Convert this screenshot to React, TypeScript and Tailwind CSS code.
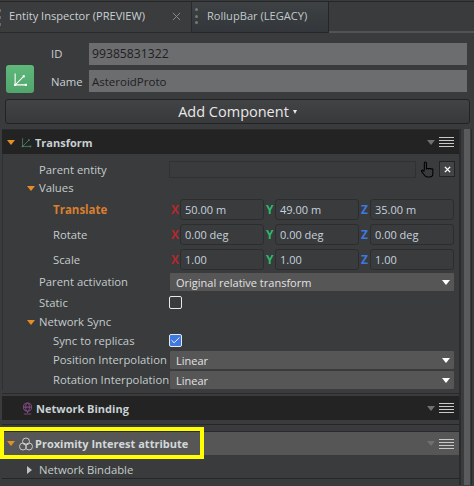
import { Check } from "lucide-react";
import type { ReactNode } from "react";

const FONT = "font-['Open_Sans','Noto_Sans',sans-serif]";

function TriDown({ className = "border-t-[#e58e26]" }: { className?: string }) {
  return <span className={`inline-block w-0 h-0 border-x-[4.5px] border-x-transparent border-t-[5px] ${className}`} />;
}

function TransformIcon({ className, color }: { className?: string; color: string }) {
  return (
    <svg viewBox="0 0 14 14" className={className} fill="none" stroke={color} strokeWidth="1">
      <path d="M2 1.5V12H12.5" />
      <path d="M2.5 11.5L10 4" />
      <rect x="1" y="11" width="2" height="2" fill={color} stroke="none" />
      <rect x="11" y="11" width="2" height="2" fill={color} stroke="none" />
      <rect x="9" y="3" width="2" height="2" fill={color} stroke="none" />
    </svg>
  );
}

function HeaderMenu() {
  return (
    <div className="flex items-center gap-[4px] ml-auto mr-[5px]">
      <TriDown className="border-t-[#6f7072]" />
      <div className="flex flex-col gap-[2px] w-[15px]">
        <div className="h-px bg-[#c8c8c8]" />
        <div className="h-px bg-[#c8c8c8]" />
        <div className="h-px bg-[#c8c8c8]" />
        <div className="h-px bg-[#c8c8c8]" />
      </div>
    </div>
  );
}

function Row({ label, indent, h, color = "text-[#c4cbcc]", bold, children }: {
  label: string; indent: number; h: string; color?: string; bold?: boolean; children?: ReactNode;
}) {
  return (
    <div className={`flex items-center ${h}`}>
      <div className={`w-[166px] shrink-0 whitespace-nowrap ${color} ${bold ? "font-bold text-[11.5px]" : ""} ${indent === 1 ? "pl-[36px]" : "pl-[50px]"}`}>
        {label}
      </div>
      {children}
    </div>
  );
}

function Group({ label, h }: { label: string; h: string }) {
  return (
    <div className={`flex items-center ${h} pl-[24px] gap-[3px] text-[#c4cbcc]`}>
      <TriDown />
      <span className="ml-[1px]">{label}</span>
    </div>
  );
}

function Vec({ values }: { values: string[] }) {
  const axes = [
    ["X", "text-[#b3282c]"],
    ["Y", "text-[#2fb86a]"],
    ["Z", "text-[#3f78e0]"],
  ];
  return (
    <div className="flex items-center pl-[2px] gap-[2px]">
      {values.map((v, i) => (
        <div key={axes[i][0]} className="flex items-center">
          <span className={`w-[9px] font-bold text-[12px] ${axes[i][1]}`}>{axes[i][0]}</span>
          <div className="w-[84px] h-[21px] pl-[4px] flex items-center border border-[#2c2d2f] rounded-[3px] text-[11px] text-[#c5d3dd] bg-[#3a3b3d]">
            {v}
          </div>
        </div>
      ))}
    </div>
  );
}

function Select({ value }: { value: string }) {
  return (
    <div className="w-[284px] ml-px h-[18px] bg-[#565656] flex items-center pl-[6px] pr-[4px] text-[11px] text-[#e2e2e2] rounded-[1px]">
      <span>{value}</span>
      <span className="ml-auto inline-block w-0 h-0 border-x-[4px] border-x-transparent border-t-[5px] border-t-white" />
    </div>
  );
}

function PanelHeader({ h, dark, children }: { h: string; dark?: boolean; children: ReactNode }) {
  return (
    <div className={`relative flex items-center ${h} ${dark ? "bg-[#232323]" : "bg-[#565656]"} text-[#c8d0d4] font-bold text-[11px]`}>
      {children}
      <HeaderMenu />
    </div>
  );
}

export default function App() {
  return (
    <div className={`${FONT} w-[474px] h-[486px] overflow-hidden bg-[#3a3b3d] text-[11.3px] leading-none`}>
      {/* タブ */}
      <div className="h-[33px] pt-px">
        <div className="flex h-[32px] border-t border-t-[#262626] text-[11.1px]">
          <div className="w-[192px] h-[31px] flex items-center pl-[9px] pb-[2px] bg-[#3b3c3e] border-r border-b border-[#2a2a2c] text-[#c9d1d2] relative">
            <div className="absolute left-[-1px] top-[7px] flex flex-col gap-[4px]">
              <div className="w-[2px] h-[3px] bg-[#6a6b6d]" />
              <div className="w-[2px] h-[3px] bg-[#6a6b6d]" />
              <div className="w-[2px] h-[3px] bg-[#6a6b6d]" />
            </div>
            Entity Inspector (PREVIEW)
            <svg viewBox="0 0 10 10" className="absolute left-[172px] top-[10px] w-[9px] h-[9px]" stroke="#8a8b8d" strokeWidth="1.1">
              <path d="M1 1L9 9M9 1L1 9" />
            </svg>
          </div>
          <div className="w-[137px] h-[31px] flex items-center pl-[15px] pb-[2px] bg-gradient-to-b from-[#3e4244] to-[#33363a] border-r border-b border-[#262626] text-[#c0cacb] relative">
            <div className="absolute left-[3px] top-[6px] flex flex-col gap-[3.5px]">
              <div className="w-[3px] h-[3px] rounded-full bg-[#77787a]" />
              <div className="w-[3px] h-[3px] rounded-full bg-[#77787a]" />
              <div className="w-[3px] h-[3px] rounded-full bg-[#77787a]" />
            </div>
            RollupBar (LEGACY)
          </div>
          <div className="flex-1 h-[31px] border-b-2 border-b-[#525355]" />
        </div>
      </div>

      {/* エンティティ情報 */}
      <div className="flex h-[60px] pl-[6px] pr-[7px] pt-[10px]">
        <div className="w-[28px] h-[28px] mt-[22px] rounded-[3px] bg-gradient-to-b from-[#5fb97a] to-[#50a56c] flex items-center justify-center shrink-0">
          <TransformIcon className="w-[15px] h-[15px]" color="#ffffff" />
        </div>
        <div className="flex-1 flex flex-col gap-[5px]">
          <div className="flex items-center h-[22px]">
            <span className="w-[21px] ml-[17px] text-[#c9d1d2]">ID</span>
            <div className="ml-[17px] flex-1 h-[22px] bg-[#6c6d6f] flex items-center pl-[3px] text-[12.2px] text-[#1f2023]">99385831322</div>
          </div>
          <div className="flex items-center h-[22px]">
            <span className="w-[38px] ml-[17px] pt-px text-[#c9d1d2]">Name</span>
            <div className="flex-1 h-[22px] bg-[#6c6d6f] flex items-center pl-[3px] pt-px text-[11.5px] text-[#1f2023]">AsteroidProto</div>
          </div>
        </div>
      </div>

      {/* 追加ボタン */}
      <div className="pl-[5px] pr-[4px] pt-[6px]">
        <div className="h-[25px] rounded-[3px] border border-[#232325] bg-gradient-to-b from-[#424345] to-[#38393b] flex items-center justify-center pt-px text-[14.5px] text-[#e8e8e8] gap-[4px]">
          Add Component
          <TriDown className="border-t-[#e8e8e8] !border-x-[2.5px] !border-t-[4px]" />
        </div>
      </div>

      <div className="flex mt-[5px] pl-[2px]">
        <div className="w-[457px] shrink-0">
          {/* Transform */}
          <div className="border-t border-[#2a2a2c]">
            <PanelHeader h="h-[24px]" dark>
              <span className="ml-[5px] flex"><TriDown /></span>
              <TransformIcon className="w-[11px] h-[11px] ml-[6px] mr-[2px]" color="#4c8a63" />
              <span className="ml-px">Transform</span>
            </PanelHeader>
            <div className="border-l border-l-[#2f3032]">
              <Row label="Parent entity" indent={1} h="h-[28px] pt-[2px]" color="text-[#c4cbcc] pt-px">
                <div className="w-[247px] h-[17px] border border-[#303133] bg-[#3a3b3d]" />
                <svg viewBox="1 0 12 16" className="w-[13px] h-[17px] ml-[5px]" fill="none" stroke="#000000" strokeWidth="1">
                  <path d="M4 9V2a1 1 0 0 1 2 0v6M6 7h2v1M8 7h2v1M10 7.5h2V12c0 2-1.5 3-3 3H7c-1.5 0-3-1.500-4-3L1.500 10c-.5-1 .5-2 1.500-1L4 10" />
                </svg>
                <div className="w-[16px] h-[16px] ml-[5px] bg-[#434446] border border-[#232325] flex items-center justify-center">
                  <svg viewBox="0 0 8 8" className="w-[7px] h-[7px]" stroke="#ffffff" strokeWidth="1.6"><path d="M1 1L7 7M7 1L1 7" /></svg>
                </div>
              </Row>
              <Group label="Values" h="h-[12px]" />
              <Row label="Translate" indent={2} h="h-[28px] pt-[3px]" color="text-[#d97f2e]" bold>
                <Vec values={["50.00 m", "49.00 m", "35.00 m"]} />
              </Row>
              <Row label="Rotate" indent={2} h="h-[25px]"><Vec values={["0.00 deg", "0.00 deg", "0.00 deg"]} /></Row>
              <Row label="Scale" indent={2} h="h-[25px]"><Vec values={["1.00", "1.00", "1.00"]} /></Row>
              <Row label="Parent activation" indent={1} h="h-[20px]"><Select value="Original relative transform" /></Row>
              <Row label="Static" indent={1} h="h-[21px]">
                <div className="w-[13px] h-[13px] rounded-[2px] border border-[#e8e8e8]" />
              </Row>
              <Group label="Network Sync" h="h-[18px]" />
              <Row label="Sync to replicas" indent={2} h="h-[19px]">
                <div className="w-[13px] h-[13px] rounded-[2px] border border-[#e8e8e8] bg-[#3f78e0] flex items-center justify-center">
                  <Check className="w-[11px] h-[11px] text-white" strokeWidth={2} />
                </div>
              </Row>
              <Row label="Position Interpolation" indent={2} h="h-[20px]"><Select value="Linear" /></Row>
              <Row label="Rotation Interpolation" indent={2} h="h-[20px]"><Select value="Linear" /></Row>
            </div>
          </div>

          {/* Network Binding */}
          <div className="mt-[3px] border-t border-[#2a2a2c]">
            <div className="h-[2px]" />
            <PanelHeader h="h-[24px]" dark>
              <svg viewBox="0 0 12 14" className="w-[11px] h-[13px] ml-[20px] mr-[2px]" fill="none" stroke="#7d4a7d" strokeWidth="1.1">
                <circle cx="6" cy="5.500" r="4.500" />
                <ellipse cx="6" cy="5.500" rx="2" ry="4.500" />
                <path d="M1.500 5.500h9M6 10v2M2 13h8" />
              </svg>
              <span className="ml-px">Network Binding</span>
            </PanelHeader>
            <div className="h-[5px] border-b border-[#262628]" />
          </div>

          {/* Proximity Interest attribute */}
          <div className="mt-[6px] border-t border-[#2a2a2c]">
            <PanelHeader h="h-[23px]">
              <span className="ml-[5px] flex"><TriDown /></span>
              <svg viewBox="0 0 14 14" className="w-[14px] h-[14px] ml-[4px] mr-[1px]" fill="none" stroke="#c9c9c9" strokeWidth="1">
                <circle cx="7" cy="4.500" r="3.500" />
                <circle cx="4" cy="9.500" r="3.500" />
                <circle cx="10" cy="9.500" r="3.500" />
              </svg>
              <span className="ml-px text-[#d2d8da]">Proximity Interest attribute</span>
              <div className="absolute left-[-2px] top-[-5px] w-[204px] h-[32px] border-[4px] border-[#ffff00]" />
            </PanelHeader>
            <div className="h-[23px] flex items-center pl-[25px] pt-[7px] gap-[7px] text-[#c4cbcc]">
              <span className="inline-block w-0 h-0 border-y-[4px] border-y-transparent border-l-[5px] border-l-[#c0c1c3]" />
              Network Bindable
            </div>
            <div className="border-t border-[#262628]" />
          </div>
        </div>

        {/* スクロールバー */}
        <div className="w-[15px] h-[356px] flex">
          <div className="w-[2px] bg-[#2a2b2d]" />
          <div className="w-[3px] bg-[#3a3b3d]" />
          <div className="w-[6px] bg-[#5a5b5d]" />
          <div className="w-[1px] ml-px bg-[#2a2b2d]" />
        </div>
      </div>
    </div>
  );
}
